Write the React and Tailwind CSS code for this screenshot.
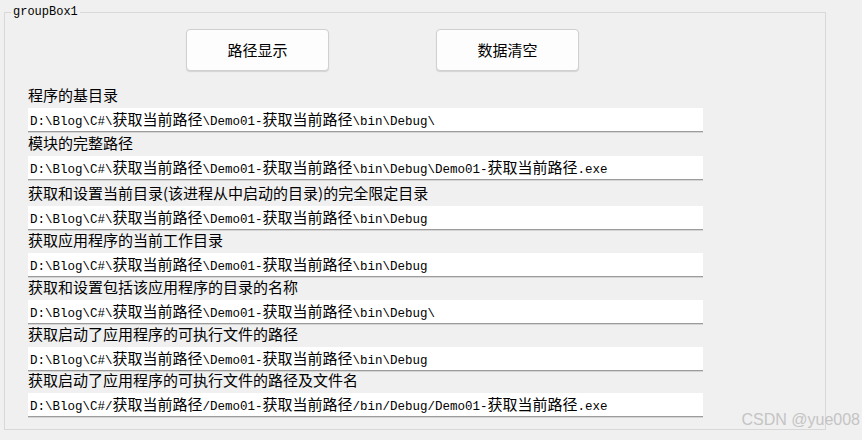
import React from "react";

const rows = [
  {
    label: "程序的基目录",
    value: "D:\\Blog\\C#\\获取当前路径\\Demo01-获取当前路径\\bin\\Debug\\",
    gap: "mt-[14px]",
  },
  {
    label: "模块的完整路径",
    value: "D:\\Blog\\C#\\获取当前路径\\Demo01-获取当前路径\\bin\\Debug\\Demo01-获取当前路径.exe",
    gap: "mt-[1px]",
  },
  {
    label: "获取和设置当前目录(该进程从中启动的目录)的完全限定目录",
    value: "D:\\Blog\\C#\\获取当前路径\\Demo01-获取当前路径\\bin\\Debug",
    gap: "mt-[3px]",
  },
  {
    label: "获取应用程序的当前工作目录",
    value: "D:\\Blog\\C#\\获取当前路径\\Demo01-获取当前路径\\bin\\Debug",
    gap: "mt-0",
  },
  {
    label: "获取和设置包括该应用程序的目录的名称",
    value: "D:\\Blog\\C#\\获取当前路径\\Demo01-获取当前路径\\bin\\Debug\\",
    gap: "mt-0",
  },
  {
    label: "获取启动了应用程序的可执行文件的路径",
    value: "D:\\Blog\\C#\\获取当前路径\\Demo01-获取当前路径\\bin\\Debug",
    gap: "mt-0",
  },
  {
    label: "获取启动了应用程序的可执行文件的路径及文件名",
    value: "D:\\Blog\\C#/获取当前路径/Demo01-获取当前路径/bin/Debug/Demo01-获取当前路径.exe",
    gap: "mt-[-1px]",
  },
];

// latin runs are half width, CJK runs full width (like SimSun in a WinForms TextBox)
const PathText = ({ text }) => {
  const parts = text.split(/([\u4e00-\u9fff]+)/);
  return (
    <span className="whitespace-pre">
      {parts.map((part, i) =>
        i % 2 === 1 ? (
          <span
            key={i}
            className="text-[15px] font-['Noto_Sans_CJK_SC',sans-serif]"
          >
            {part}
          </span>
        ) : (
          <span
            key={i}
            className="text-[12.5px] font-['Liberation_Mono',monospace]"
          >
            {part}
          </span>
        )
      )}
    </span>
  );
};

const Button = ({ children }) => (
  <button className="w-[143px] h-[42px] rounded-[4px] border border-[#d0d0d0] bg-[#fdfdfd] shadow-[0_1px_1px_rgba(0,0,0,0.12)] text-[15px] text-black font-['Noto_Sans_CJK_SC',sans-serif]">
    {children}
  </button>
);

export default function App() {
  return (
    <div className="relative w-[862px] h-[440px] overflow-hidden bg-[#f0f0f0] pt-[5px]">
      <fieldset className="ml-[4px] w-[822px] h-[425px] border border-[#d8d8d8]">
        <legend className="ml-[6px] px-[2px] leading-[14px] text-[12px] text-black font-['Liberation_Mono',monospace]">
          groupBox1
        </legend>

        {/* Buttons */}
        <div className="flex mt-[10px] ml-[181px] gap-[107px]">
          <Button>路径显示</Button>
          <Button>数据清空</Button>
        </div>

        {/* Path rows */}
        <div className="flex flex-col">
          {rows.map((row) => (
            <div key={row.label} className={row.gap}>
              <div className="ml-[23px] h-[20px] leading-[20px] text-[15px] text-black whitespace-nowrap font-['Noto_Sans_CJK_SC',sans-serif]">
                {row.label}
              </div>
              <div className="ml-[23px] mt-[3px] w-[675px] h-[24px] flex items-center pl-[2px] bg-white border-b border-[#9c9c9c] shadow-[0_1px_0_#d4d4d4] text-black">
                <PathText text={row.value} />
              </div>
            </div>
          ))}
        </div>
      </fieldset>

      {/* watermark */}
      <div className="absolute right-[2px] top-[410px] text-[16px] leading-[20px] text-[#c4c4c4] font-['Liberation_Sans',sans-serif]">
        CSDN @yue008
      </div>
    </div>
  );
}
